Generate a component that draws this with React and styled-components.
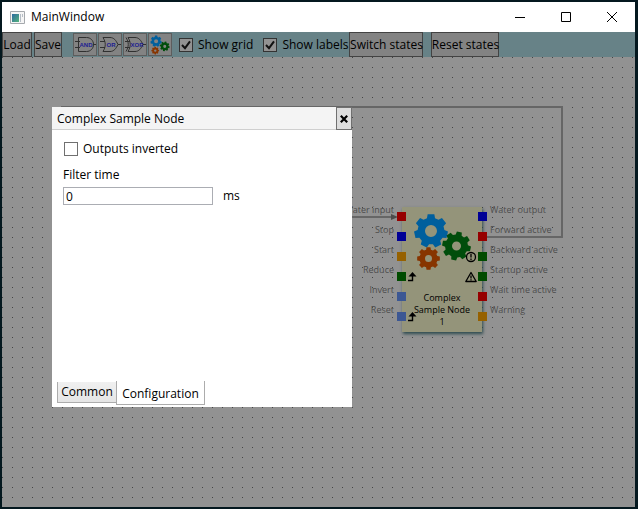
import React, { useState } from "react";
import styled, { createGlobalStyle } from "styled-components";

const GlobalStyle = createGlobalStyle`
  * { box-sizing: border-box; }
  body {
    margin: 0;
    font: 12px/16px "Segoe UI", "Open Sans", "Noto Sans", sans-serif;
    color: #000;
  }
  button, input { font: inherit; color: inherit; margin: 0; }
`;

const Window = styled.div`
  display: flex;
  flex-direction: column;
  min-height: 100vh;
  background: #929292;
  border: 2px solid #04181f;
  border-right-width: 3px;
`;

const TitleBar = styled.header`
  display: flex;
  align-items: center;
  height: 30px;
  padding-left: 8px;
  background: #fff;
`;

const Title = styled.h1`
  flex: 1;
  margin: 0 0 0 6px;
  font-size: 12px;
  font-weight: 400;
`;

const WindowButton = styled.button`
  display: flex;
  align-items: center;
  justify-content: center;
  width: 46px;
  height: 30px;
  padding: 0;
  border: 0;
  background: none;
`;

const ToolBar = styled.div`
  display: flex;
  align-items: center;
  height: 25px;
  background: #678287;
  white-space: nowrap;
`;

const ToolGroup = styled.div`
  display: flex;
  align-items: center;
  gap: ${(p) => p.$gap}px;
  margin-right: ${(p) => p.$after || 0}px;
`;

const ToolButton = styled.button`
  width: ${(p) => p.$width}px;
  height: 25px;
  padding: 0;
  display: flex;
  align-items: center;
  justify-content: center;
  border: 1px solid #434343;
  background: #838383;
  white-space: nowrap;
`;

const IconButton = styled(ToolButton)`
  height: 23px;
  border-color: #5d5d5d;
`;

const CheckLabel = styled.label`
  display: flex;
  align-items: center;
  gap: 5px;
`;

const CheckBox = styled.input`
  appearance: none;
  width: 14px;
  height: 14px;
  border: 1px solid ${(p) => (p.$dimmed ? "#333" : "#707070")};
  background: ${(p) => (p.$dimmed ? "#929292" : "#fff")};
  &:checked {
    background-image: url("data:image/svg+xml,%3Csvg xmlns='http://www.w3.org/2000/svg' viewBox='0 0 12 12'%3E%3Cpath d='M2 6l3 3.2L10 2.4' fill='none' stroke='%23111' stroke-width='2'/%3E%3C/svg%3E");
  }
`;

const Canvas = styled.main`
  position: relative;
  flex: 1;
  overflow: hidden;
  background: ${(p) =>
    p.$grid
      ? `linear-gradient(90deg, transparent 1px, #929292 1px) 0 0 / 10px 10px,
         linear-gradient(#444 1px, #929292 1px) 0 0 / 10px 10px`
      : "#929292"};
`;

const Wires = styled.svg`
  position: absolute;
  left: 0;
  top: 0;
`;

const Node = styled.section`
  position: absolute;
  left: 400px;
  top: 150px;
  width: 80px;
  height: 125px;
  background: #94947a;
  box-shadow: 1px 2px 3px #2c4a4e;
`;

const NodeArt = styled.svg`
  display: block;
`;

const NodeTitle = styled.h2`
  position: absolute;
  inset: 85px 0 auto;
  margin: 0;
  font-size: 9px;
  line-height: 12px;
  font-weight: 400;
  text-align: center;
`;

const Ports = styled.ul`
  position: absolute;
  top: 5px;
  ${(p) => p.$side}: -5px;
  display: flex;
  flex-direction: column;
  gap: 11px;
  margin: 0;
  padding: 0;
  list-style: none;
`;

const Port = styled.li`
  position: relative;
  width: 9px;
  height: 9px;
  background: ${(p) => p.$color};
`;

const PortLabel = styled.span`
  position: absolute;
  top: -8px;
  ${(p) => (p.$side === "left" ? "right" : "left")}: 12px;
  font-size: 9px;
  line-height: 12px;
  color: #4d4d4d;
  white-space: nowrap;
`;

const Dialog = styled.section`
  position: absolute;
  left: 50px;
  top: 50px;
  width: 300px;
  height: 300px;
  display: flex;
  flex-direction: column;
  background: #fff;
`;

const DialogHeader = styled.header`
  display: flex;
  height: 23px;
  background: #f4f4f4;
  border-bottom: 1px solid #cfcfcf;
`;

const DialogTitle = styled.h2`
  flex: 1;
  margin: 0;
  padding: 4px 5px;
  font-size: 12px;
  line-height: 16px;
  font-weight: 400;
`;

const CloseButton = styled.button`
  display: flex;
  align-items: center;
  justify-content: center;
  width: 16px;
  height: 23px;
  padding: 0;
  border: 1px solid #707070;
  background: #ddd;
`;

const Form = styled.div`
  flex: 1;
  display: flex;
  flex-direction: column;
  align-items: flex-start;
  padding: 11px 11px 0;
`;

const OutputsLabel = styled(CheckLabel)`
  padding-left: 1px;
  margin-bottom: 10px;
`;

const FieldRow = styled.div`
  display: flex;
  align-items: center;
  gap: 10px;
  margin-top: 4px;
`;

const TextBox = styled.input`
  width: 150px;
  height: 18px;
  padding: 0 2px;
  border: 1px solid #abadb3;
  background: #fff;
`;

const Tabs = styled.div`
  display: flex;
  align-items: flex-start;
  height: 26px;
  padding-left: 5px;
`;

const Tab = styled.button`
  width: ${(p) => p.$width}px;
  height: ${(p) => (p.$active ? 24 : 21)}px;
  margin-top: ${(p) => (p.$active ? 0 : 1)}px;
  padding: ${(p) => (p.$active ? 2 : 0)}px 0 0;
  border: 1px solid #acacac;
  border-top: 0;
  border-right-width: ${(p) => (p.$active ? 1 : 0)}px;
  background: ${(p) => (p.$active ? "#fff" : "linear-gradient(#f0f0f0, #e5e5e5)")};
`;

const INPUTS = [
  ["Water input", "#960000"],
  ["Stop", "#000096"],
  ["Start", "#966100"],
  ["Reduce", "#004b00"],
  ["Invert", "#3c5793"],
  ["Reset", "#3c5793"],
];

const OUTPUTS = [
  ["Water output", "#000096"],
  ["Forward active", "#960000"],
  ["Backward active", "#004b00"],
  ["Startup active", "#004b00"],
  ["Wait time active", "#960000"],
  ["Warning", "#966100"],
];

function gearPath(cx, cy, r, hole, teeth, turn) {
  const inner = r * 0.79;
  const step = (Math.PI * 2) / teeth;
  const points = [];
  for (let i = 0; i < teeth; i++) {
    const a = turn - Math.PI / 2 + i * step;
    [[-0.34, inner], [-0.22, r], [0.22, r], [0.34, inner]].forEach(([k, d]) => {
      points.push(`${(cx + Math.cos(a + k * step) * d).toFixed(2)} ${(cy + Math.sin(a + k * step) * d).toFixed(2)}`);
    });
  }
  return `M${points.join("L")}ZM${cx - hole} ${cy}a${hole} ${hole} 0 1 0 ${hole * 2} 0a${hole} ${hole} 0 1 0 ${-hole * 2} 0Z`;
}

function Gears() {
  return (
    <g fillRule="evenodd">
      <path d={gearPath(29, 24, 17, 6, 7, 0)} fill="#005f9d" />
      <path d={gearPath(54.5, 39, 14.5, 4.5, 8, 0.2)} fill="#004d0b" />
      <path d={gearPath(26.5, 51.5, 11.5, 3.5, 8, 0)} fill="#873500" />
    </g>
  );
}

function GateIcon({ label, kind }) {
  const body = kind === "and" ? "M3.5 3.5h8c4 0 7 3 7 7s-3 7-7 7h-8Z" : "M3 3.5h7c4 0 6 3 8 7-2 4-4 7-8 7H3c3-5 3-9 0-14Z";
  return (
    <svg width="21" height="21" viewBox="0 0 21 21" aria-label={label} role="img">
      <g fill="none" stroke="#303030">
        <path d={body} />
        <path d="M0 7.5h5M0 13.5h5M18 10.5h3" />
        {kind === "xor" && <path d="M1 3.5c3 5 3 9 0 14" />}
      </g>
      <text x={kind === "xor" ? 12 : 11} y="13" textAnchor="middle" fontFamily="Liberation Sans" fontWeight="700" fontSize="6" fill="#1d1d92">
        {label}
      </text>
    </svg>
  );
}

function Rising() {
  return (
    <g>
      <path d="M0 8.5h4.5V3" fill="none" stroke="#000" strokeWidth="1.4" />
      <path d="M4.500 0l4 4.500h-8Z" />
    </g>
  );
}

function AppIcon() {
  return (
    <svg width="15" height="13" viewBox="0 0 15 13">
      <defs>
        <linearGradient id="pane" x2="1" y2="1">
          <stop stopColor="#2c6aa0" />
          <stop offset="1" stopColor="#55b37c" />
        </linearGradient>
      </defs>
      <path d="M.5.5h14v12H.5Z" fill="#f5f5f5" stroke="#a5a9ad" />
      <path d="M2 3h7v8H2Z" fill="url(#pane)" />
      <path d="M10 3h1v8h-1ZM12 3h1v3h-1Z" fill="#b5bdc5" />
    </svg>
  );
}

function PortList({ side, items, labels }) {
  return (
    <Ports $side={side}>
      {items.map(([name, color]) => (
        <Port key={name} $color={color}>
          {labels && <PortLabel $side={side}>{name}</PortLabel>}
        </Port>
      ))}
    </Ports>
  );
}

export default function App() {
  const [grid, setGrid] = useState(true);
  const [labels, setLabels] = useState(true);
  const [inverted, setInverted] = useState(false);
  const [time, setTime] = useState("0");

  return (
    <>
      <GlobalStyle />
      <Window>
        <TitleBar>
          <AppIcon />
          <Title>MainWindow</Title>
          <WindowButton aria-label="Minimize">
            <svg width="10" height="10"><path d="M0 5.5h10" stroke="#000" /></svg>
          </WindowButton>
          <WindowButton aria-label="Maximize">
            <svg width="10" height="10"><path d="M.5.5h9v9h-9Z" fill="none" stroke="#000" /></svg>
          </WindowButton>
          <WindowButton aria-label="Close">
            <svg width="10" height="10"><path d="M0 0l10 10M10 0L0 10" stroke="#000" /></svg>
          </WindowButton>
        </TitleBar>

        <ToolBar>
          <ToolGroup $gap={2} $after={11}>
            <ToolButton $width={30}>Load</ToolButton>
            <ToolButton $width={28}>Save</ToolButton>
          </ToolGroup>
          <ToolGroup $gap={1} $after={7}>
            <IconButton $width={24} aria-label="AND"><GateIcon label="AND" kind="and" /></IconButton>
            <IconButton $width={24} aria-label="OR"><GateIcon label="OR" kind="or" /></IconButton>
            <IconButton $width={24} aria-label="XOR"><GateIcon label="XOR" kind="xor" /></IconButton>
            <IconButton $width={24} aria-label="Complex node">
              <svg width="20" height="20" viewBox="11 6 59 58"><Gears /></svg>
            </IconButton>
          </ToolGroup>
          <ToolGroup $gap={10} $after={1}>
            <CheckLabel>
              <CheckBox type="checkbox" $dimmed checked={grid} onChange={(e) => setGrid(e.target.checked)} />
              Show grid
            </CheckLabel>
            <CheckLabel>
              <CheckBox type="checkbox" $dimmed checked={labels} onChange={(e) => setLabels(e.target.checked)} />
              Show labels
            </CheckLabel>
          </ToolGroup>
          <ToolGroup $gap={8}>
            <ToolButton $width={74}>Switch states</ToolButton>
            <ToolButton $width={68}>Reset states</ToolButton>
          </ToolGroup>
        </ToolBar>

        <Canvas $grid={grid}>
          <Wires width="580" height="240">
            <g fill="none" stroke="#666" strokeWidth="2">
              <path d="M485 180h75V50H60v110h330" />
            </g>
            <path d="M389 157l7 3-7 3Z" fill="#4c4c4c" />
          </Wires>

          <Node>
            <NodeArt width="80" height="125" viewBox="0 0 80 125">
              <Gears />
              <g fill="none" stroke="#000" strokeWidth="1.3">
                <circle cx="69" cy="50" r="4.500" />
                <path d="M69 47v3.500M69 51.500v1.500" />
                <path d="M69 65.500l5.200 9h-10.400Z" strokeLinejoin="round" />
                <path d="M69 68.500v3M69 72.200v1.300" />
              </g>
              {[65, 105].map((y) => (
                <g key={y} transform={`translate(6 ${y})`}>
                  <Rising />
                </g>
              ))}
            </NodeArt>
            <NodeTitle>Complex<br />Sample Node<br />1</NodeTitle>
            <PortList side="left" items={INPUTS} labels={labels} />
            <PortList side="right" items={OUTPUTS} labels={labels} />
          </Node>

          <Dialog role="dialog" aria-label="Complex Sample Node">
            <DialogHeader>
              <DialogTitle>Complex Sample Node</DialogTitle>
              <CloseButton aria-label="Close dialog">
                <svg width="8" height="8"><path d="M.8.8l6.400 6.400M7.200.8L.8 7.200" stroke="#000" strokeWidth="2.200" /></svg>
              </CloseButton>
            </DialogHeader>
            <Form>
              <OutputsLabel>
                <CheckBox type="checkbox" checked={inverted} onChange={(e) => setInverted(e.target.checked)} />
                Outputs inverted
              </OutputsLabel>
              <label htmlFor="filter-time">Filter time</label>
              <FieldRow>
                <TextBox id="filter-time" value={time} onChange={(e) => setTime(e.target.value)} />
                <span>ms</span>
              </FieldRow>
            </Form>
            <Tabs role="tablist">
              <Tab role="tab" aria-selected="false" $width={59}>Common</Tab>
              <Tab role="tab" aria-selected="true" $active $width={89}>Configuration</Tab>
            </Tabs>
          </Dialog>
        </Canvas>
      </Window>
    </>
  );
}
